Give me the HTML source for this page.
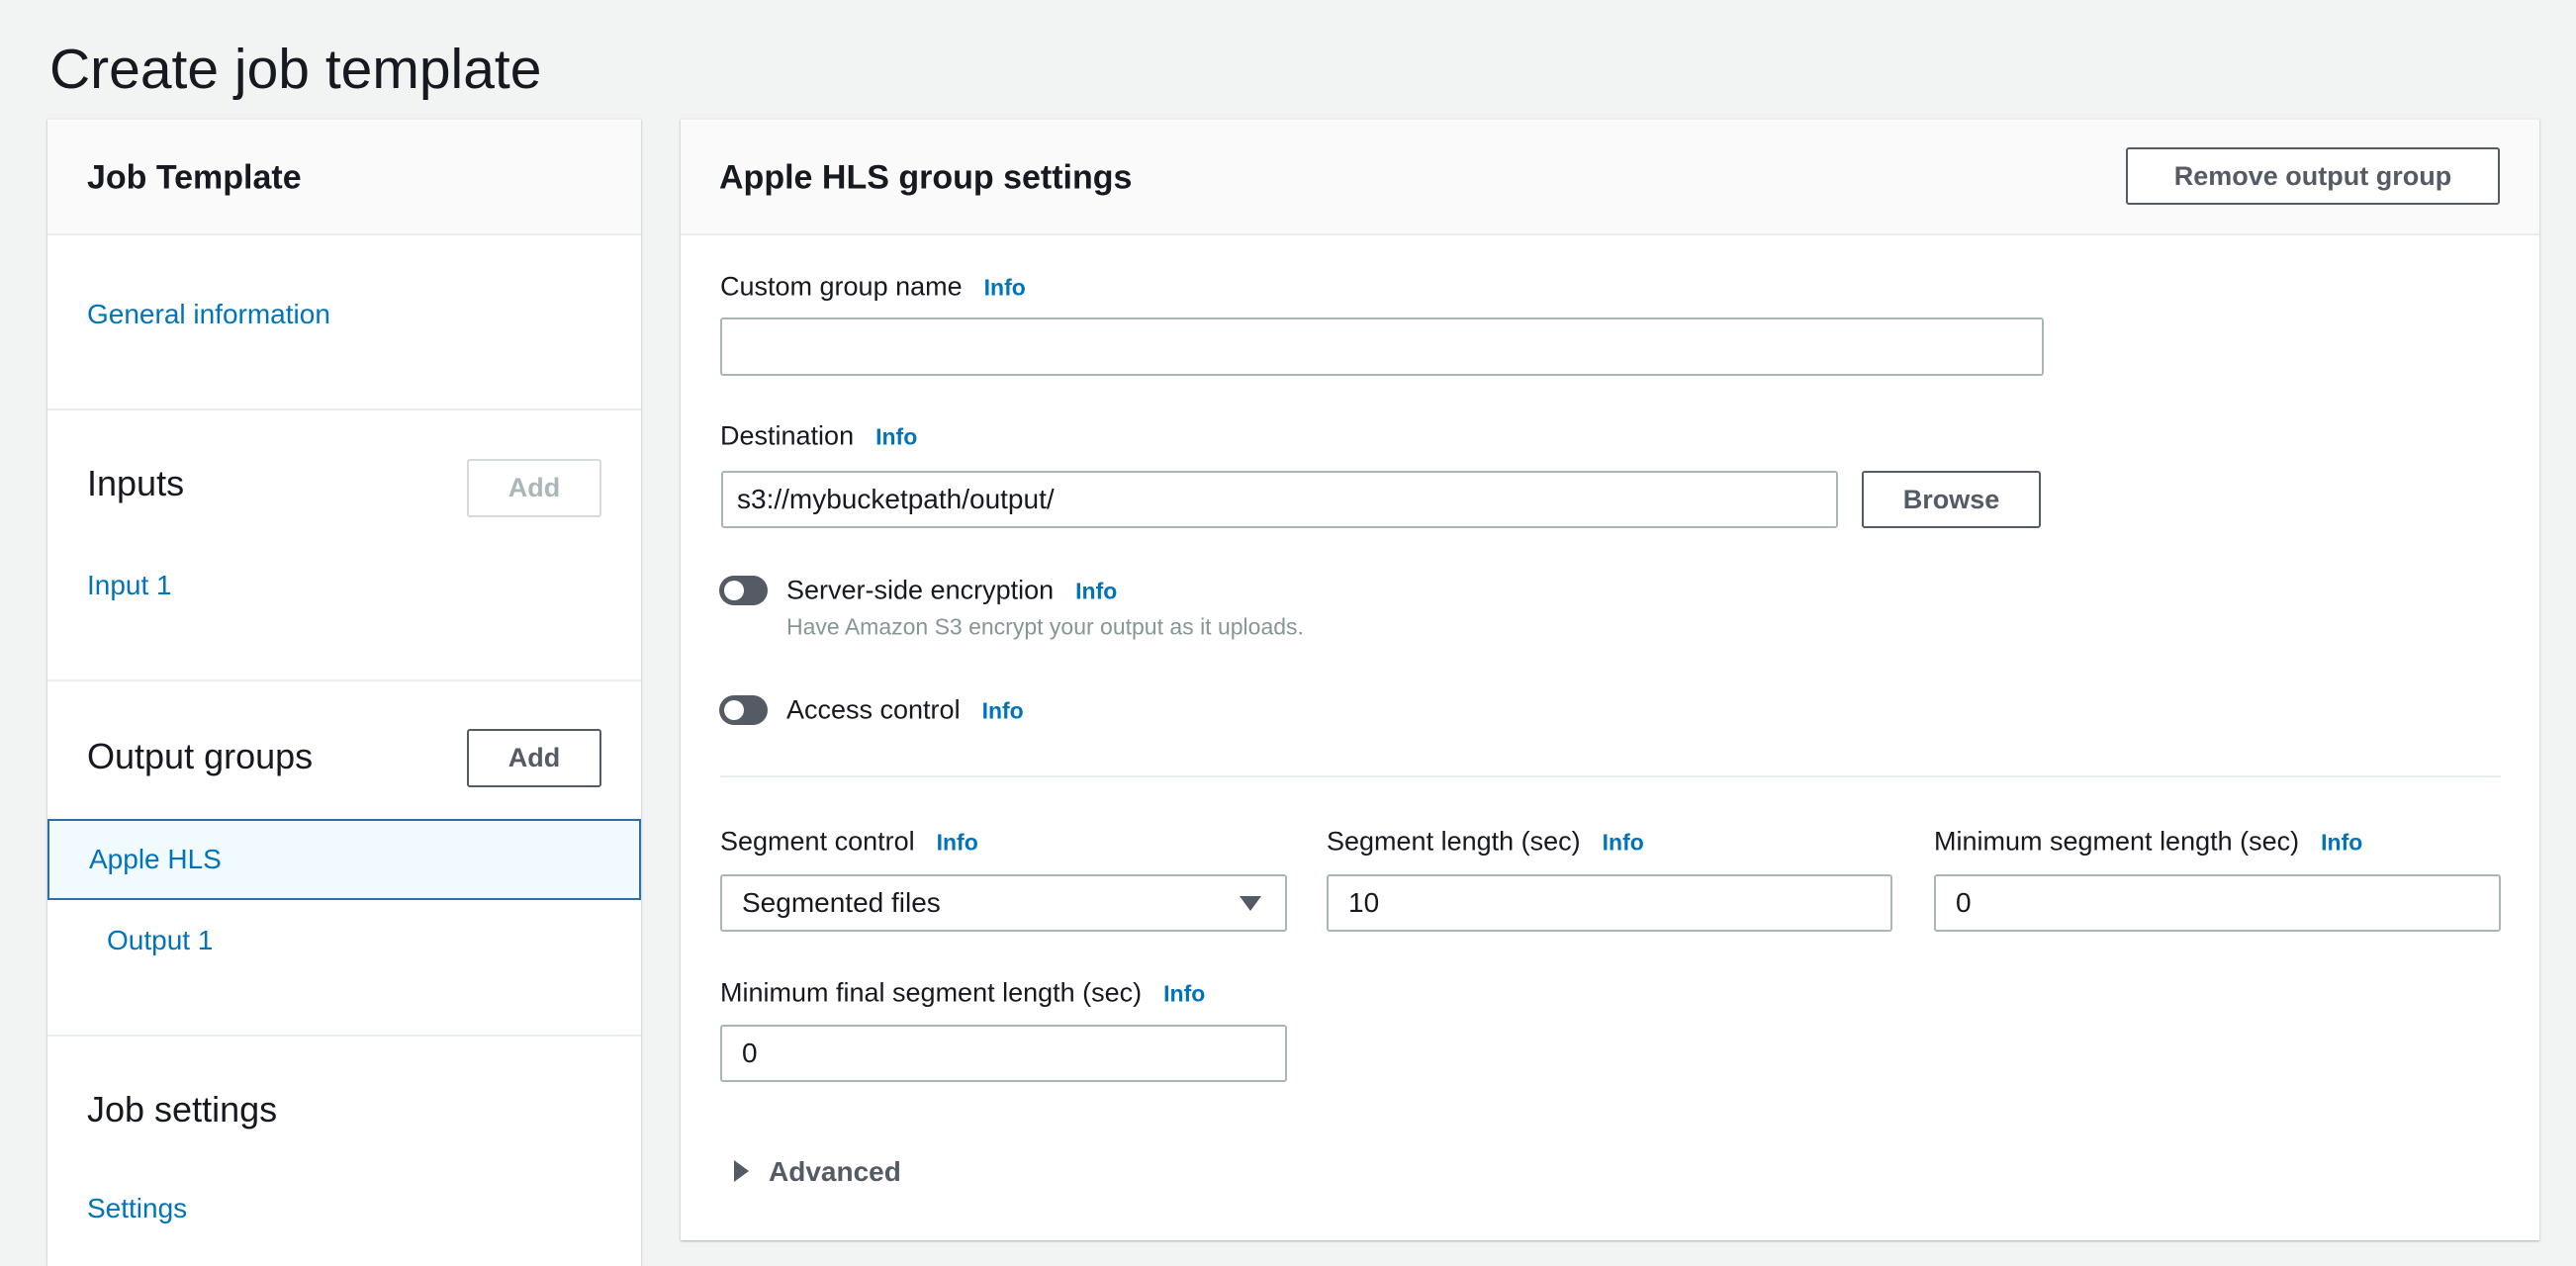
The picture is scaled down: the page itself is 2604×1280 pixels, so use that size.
<!DOCTYPE html>
<html><head><meta charset="utf-8"><style>
*{box-sizing:border-box;margin:0;padding:0}
body{width:2604px;height:1272px;background:#f2f3f3;font-family:"Liberation Sans",sans-serif;color:#16191f;position:relative;overflow:hidden}
.a{position:absolute;white-space:nowrap}
.panel{position:absolute;background:#fff;box-shadow:0 1px 2px rgba(0,28,36,.3);border-top:1px solid #eaeded}
.hdr{position:absolute;left:0;right:0;top:0;height:117px;background:#fafafa;border-bottom:2px solid #eaeded}
.h2{font-size:34px;font-weight:bold;transform:translateY(-50%)}
.h3{font-size:36px;transform:translateY(-50%)}
.lnk{color:#0073bb;font-size:28px;transform:translateY(-50%)}
.lbl{font-size:27px;transform:translateY(-50%)}
.info{color:#0073bb;font-size:23px;font-weight:bold;margin-left:22px}
.inp{position:absolute;border:2px solid #aab7b8;border-radius:3px;background:#fff;font-size:28px;padding-left:20px;display:flex;align-items:center}
.btn{position:absolute;border:2px solid #545b64;border-radius:3px;background:#fff;font-size:27px;font-weight:bold;color:#545b64;display:flex;align-items:center;justify-content:center}
.tog{position:absolute;width:49px;height:30px;border-radius:15px;background:#545b64}
.tog:after{content:"";position:absolute;left:5px;top:5px;width:20px;height:20px;border-radius:50%;background:#fff}
.div{position:absolute;height:2px;background:#eaeded}
</style></head><body>
<div class="a" style="left:50px;top:70px;font-size:57px;transform:translateY(-50%)">Create job template</div>

<div class="panel" style="left:48px;top:120px;width:600px;height:1160px">
  <div class="hdr"></div>
  <div class="a h2" style="left:40px;top:59px">Job Template</div>
  <div class="a lnk" style="left:40px;top:197px">General information</div>
  <div class="div" style="left:0;right:0;top:292px"></div>
  <div class="a h3" style="left:40px;top:368px">Inputs</div>
  <div class="btn" style="left:424px;top:343px;width:136px;height:59px;border-color:#d5dbdb;color:#aab7b8">Add</div>
  <div class="a lnk" style="left:40px;top:471px">Input 1</div>
  <div class="div" style="left:0;right:0;top:566px"></div>
  <div class="a h3" style="left:40px;top:644px">Output groups</div>
  <div class="btn" style="left:424px;top:616px;width:136px;height:59px">Add</div>
  <div style="position:absolute;left:0;top:707px;width:600px;height:82px;background:#f1faff;border:2px solid #2e6fa5"></div>
  <div class="a lnk" style="left:42px;top:748px">Apple HLS</div>
  <div class="a lnk" style="left:60px;top:830px">Output 1</div>
  <div class="div" style="left:0;right:0;top:925px"></div>
  <div class="a h3" style="left:40px;top:1001px">Job settings</div>
  <div class="a lnk" style="left:40px;top:1101px">Settings</div>
</div>

<div class="panel" style="left:688px;top:120px;width:1879px;height:1134px">
  <div class="hdr"></div>
  <div class="a h2" style="left:39px;top:59px">Apple HLS group settings</div>
  <div class="btn" style="left:1461px;top:28px;width:378px;height:58px">Remove output group</div>
  <div class="a lbl" style="left:40px;top:169px">Custom group name<span class="info">Info</span></div>
  <div class="inp" style="left:40px;top:200px;width:1338px;height:59px"></div>
  <div class="a lbl" style="left:40px;top:320px">Destination<span class="info">Info</span></div>
  <div class="inp" style="left:41px;top:355px;width:1129px;height:58px;padding-left:14px">s3://mybucketpath/output/</div>
  <div class="btn" style="left:1194px;top:355px;width:181px;height:58px">Browse</div>
  <div class="tog" style="left:39px;top:461px"></div>
  <div class="a lbl" style="left:107px;top:476px">Server-side encryption<span class="info">Info</span></div>
  <div class="a" style="left:107px;top:513px;font-size:23px;color:#879596;transform:translateY(-50%)">Have Amazon S3 encrypt your output as it uploads.</div>
  <div class="tog" style="left:39px;top:582px"></div>
  <div class="a lbl" style="left:107px;top:597px">Access control<span class="info">Info</span></div>
  <div class="div" style="left:40px;width:1800px;top:663px"></div>
  <div class="a lbl" style="left:40px;top:730px">Segment control<span class="info">Info</span></div>
  <div class="a lbl" style="left:653px;top:730px">Segment length (sec)<span class="info">Info</span></div>
  <div class="a lbl" style="left:1267px;top:730px">Minimum segment length (sec)<span class="info">Info</span></div>
  <div class="inp" style="left:40px;top:763px;width:573px;height:58px">Segmented files<span style="position:absolute;right:24px;top:20px;width:0;height:0;border-left:11px solid transparent;border-right:11px solid transparent;border-top:15px solid #545b64"></span></div>
  <div class="inp" style="left:653px;top:763px;width:572px;height:58px">10</div>
  <div class="inp" style="left:1267px;top:763px;width:573px;height:58px">0</div>
  <div class="a lbl" style="left:40px;top:883px">Minimum final segment length (sec)<span class="info">Info</span></div>
  <div class="inp" style="left:40px;top:915px;width:573px;height:58px">0</div>
  <div style="position:absolute;left:54px;top:1052px;width:0;height:0;border-top:11px solid transparent;border-bottom:11px solid transparent;border-left:15px solid #545b64"></div>
  <div class="a" style="left:89px;top:1064px;font-size:28px;font-weight:bold;color:#545b64;transform:translateY(-50%)">Advanced</div>
</div>
</body></html>
